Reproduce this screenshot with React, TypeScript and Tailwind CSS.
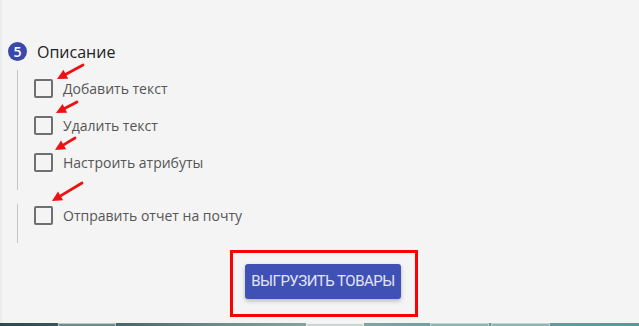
import React from "react";

const Checkbox = () => (
  <div className="w-[19px] h-[19px] border-2 border-[#6f6f6f] rounded-[2px] shrink-0" />
);

const Item = ({ label }: { label: string }) => (
  <div className="flex items-center h-[19px]">
    <div className="ml-[16px]">
      <Checkbox />
    </div>
    <span className="ml-[10px] text-[14px] text-[#555555] leading-none">{label}</span>
  </div>
);

const Arrow = ({ x1, y1, x2, y2 }: { x1: number; y1: number; x2: number; y2: number }) => {
  const dx = x2 - x1;
  const dy = y2 - y1;
  const len = Math.sqrt(dx * dx + dy * dy);
  const ux = dx / len;
  const uy = dy / len;
  const hl = 10;
  const hw = 5;
  const bx = x2 - ux * hl;
  const by = y2 - uy * hl;
  const px = -uy;
  const py = ux;
  return (
    <g>
      <line x1={x1} y1={y1} x2={bx + ux * 2} y2={by + uy * 2} stroke="#ee1111" strokeWidth={2.8} strokeLinecap="round" />
      <polygon
        points={`${x2},${y2} ${bx + px * hw},${by + py * hw} ${bx - px * hw},${by - py * hw}`}
        fill="#ee1111"
      />
    </g>
  );
};

export default function App() {
  return (
    <div
      className="relative w-[639px] h-[326px] bg-[#f4f4f4] overflow-hidden flex flex-col"
      style={{ fontFamily: '"Open Sans", "Noto Sans", sans-serif' }}
    >
      <div className="flex-1 flex flex-col border-l-2 border-[#ececec]">
        {/* header */}
        <div className="flex items-center mt-[42px] ml-[6px] h-[19px]">
          <div className="w-[19px] h-[19px] min-w-[19px] shrink-0 rounded-full bg-[#3949ab] flex items-center justify-center text-white text-[14px] font-semibold leading-none">
            5
          </div>
          <span className="ml-[10px] text-[16px] text-[#222222] leading-none">Описание</span>
        </div>

        {/* group 1 */}
        <div className="ml-[15px] mt-[9px] border-l border-[#c4c4c4] w-[300px] pt-[9px] pb-[18px] flex flex-col gap-[18px]">
          <Item label="Добавить текст" />
          <Item label="Удалить текст" />
          <Item label="Настроить атрибуты" />
        </div>

        {/* group 2 */}
        <div className="ml-[15px] mt-[14px] border-l border-[#c4c4c4] w-[300px] pt-[2px] pb-[18px] flex flex-col">
          <Item label="Отправить отчет на почту" />
        </div>

        {/* button area */}
        <div className="mt-[7px] ml-[228px] w-[188px] h-[67px] border-[3px] border-[#ff0000] flex items-start">
          <button
            className="mt-[11px] ml-[12px] w-[156px] h-[35px] bg-[#3f51b5] rounded-[3px] shadow-[0_2px_4px_rgba(0,0,0,0.25)] text-[#e2e5f5] text-[15px] tracking-[-0.5px] font-normal uppercase"
            style={{ fontFamily: '"Roboto", "Noto Sans", sans-serif' }}
          >
            Выгрузить товары
          </button>
        </div>
      </div>

      {/* bottom taskbar strip */}
      <div className="h-[3px] w-full relative bg-[linear-gradient(90deg,#2d4a4e_0%,#3e5f62_15%,#6f8f8d_35%,#86a7a4_50%,#6fa0a0_70%,#5f9696_100%)]">
        <div className="absolute left-[58px] top-0 w-[58px] h-[3px] border border-b-0 border-[#b9c9c8] bg-[#6f8a8a]" />
        <div className="absolute left-[306px] top-0 w-[58px] h-[3px] border border-b-0 border-[#f0f0f0] bg-[#c8d6d4]" />
        <div className="absolute left-[430px] top-0 w-[59px] h-[3px] border border-b-0 border-[#c0d4d3] bg-[#8fb3b2]" />
        <div className="absolute left-[491px] top-0 w-[59px] h-[3px] border border-b-0 border-[#c0d4d3] bg-[#8fb3b2]" />
      </div>

      {/* annotation arrows */}
      <svg className="absolute inset-0 pointer-events-none" width={639} height={326}>
        <Arrow x1={83} y1={65} x2={57} y2={79} />
        <Arrow x1={77} y1={102} x2={56} y2={113} />
        <Arrow x1={75} y1={138} x2={55} y2={150} />
        <Arrow x1={82} y1={183} x2={52} y2={201} />
      </svg>
    </div>
  );
}
